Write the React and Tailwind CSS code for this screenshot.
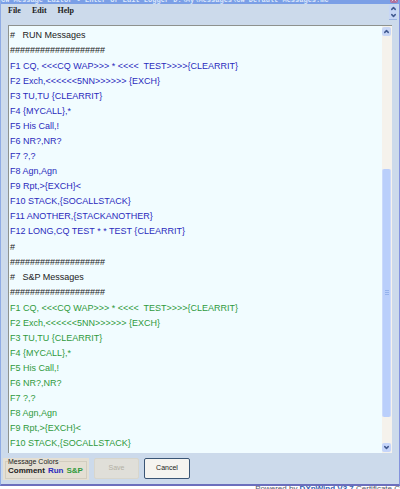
import { ChevronUp, ChevronDown, X } from 'lucide-react';

const runMessages = [
    'F1 CQ, <<<CQ WAP>>> * <<<<  TEST>>>>{CLEARRIT}',
    'F2 Exch,<<<<<<5NN>>>>>> {EXCH}',
    'F3 TU,TU {CLEARRIT}',
    'F4 {MYCALL},*',
    'F5 His Call,!',
    'F6 NR?,NR?',
    'F7 ?,?',
    'F8 Agn,Agn',
    'F9 Rpt,>{EXCH}<',
    'F10 STACK,{SOCALLSTACK}',
    'F11 ANOTHER,{STACKANOTHER}',
    'F12 LONG,CQ TEST * * TEST {CLEARRIT}',
];

const divider = '###################';

const sections = [
    { color: 'text-[#222222]', lines: ['#   RUN Messages', divider] },
    { color: 'text-[#2b2bbd]', lines: runMessages },
    { color: 'text-[#222222]', lines: ['#', divider, '#   S&P Messages', divider] },
    { color: 'text-[#2f9a3c]', lines: runMessages.slice(0, 10) },
];

function ScrollBar() {
    return (
        <div className="w-[10px] shrink-0 flex flex-col bg-[#f5f2ec]">
            <button aria-label="Scroll up" className="h-[9px] mr-px mt-px flex items-center justify-center rounded-xs bg-[#c9d7f6] text-[#41598f]">
                <ChevronUp className="w-[7px] h-[7px]" strokeWidth={5} />
            </button>
            <div className="flex-1 flex flex-col">
                <div className="flex-[132]" />
                <div className="flex-[247] mr-px rounded-xs bg-[#bacffb] border-x border-[#cbdafb] flex flex-col items-center justify-center gap-px">
                    <span className="w-1 h-px bg-[#94b2ec]" />
                    <span className="w-1 h-px bg-[#94b2ec]" />
                    <span className="w-1 h-px bg-[#94b2ec]" />
                </div>
                <div className="flex-[26]" />
            </div>
            <button aria-label="Scroll down" className="h-[9px] mr-px mb-px flex items-center justify-center rounded-xs bg-[#c5d5fa] text-[#41598f]">
                <ChevronDown className="w-[7px] h-[7px]" strokeWidth={5} />
            </button>
        </div>
    );
}

export default function App() {
    return (
        <div className="h-screen flex flex-col overflow-hidden bg-white font-['Liberation_Sans',sans-serif]">
            <div className="flex-1 min-h-0 flex flex-col bg-[#ccdaeb] border-x border-b-2 border-l-[#8fabe4] border-r-[#8494dd] border-b-[#6c6fbd]">
                {/* Title bar */}
                <header className="h-1 pb-px shrink-0 flex items-end justify-between overflow-hidden bg-[#7b9fe6]">
                    <h1 className="min-w-0 text-[7px] leading-[5px] font-bold text-[#dce8fc] whitespace-nowrap font-['Liberation_Mono',monospace]">
                        CW Message Editor - Enter or Edit Logger D:\My\Messages\CW Default Messages.mc
                    </h1>
                    <button aria-label="Close" className="w-2 h-2 mr-px shrink-0 rounded-xs bg-[#b0709c] text-white">
                        <X className="w-2 h-2" />
                    </button>
                </header>

                {/* Menu */}
                <nav className="h-[21px] shrink-0 flex items-start justify-between pl-[7px] pr-[2px] font-['Liberation_Serif',serif]">
                    <div className="flex gap-[11px] text-[8px] leading-[14px] font-bold text-[#222222]">
                        <button>File</button>
                        <button>Edit</button>
                        <button>Help</button>
                    </div>
                    <div className="w-2 mt-px flex flex-col items-center text-[#41598f] bg-[#c7d6f6] border-b border-[#9db4e0]">
                        <ChevronUp className="w-[7px] h-[7px]" strokeWidth={5} />
                        <ChevronDown className="w-[7px] h-[7px]" strokeWidth={5} />
                    </div>
                </nav>

                {/* Message list */}
                <main className="flex-1 min-h-0 mx-[7px] flex border-t border-l border-[#8e928e] bg-[#f1fcff]">
                    <div className="flex-1 min-w-0 overflow-hidden pl-px pt-[2px] flex flex-col gap-px text-[9px] leading-[15px]">
                        {sections.map((section, i) => (
                            <div key={i} className={section.color}>
                                {section.lines.map((line, j) => (
                                    <p key={j} className="whitespace-pre">{line}</p>
                                ))}
                            </div>
                        ))}
                    </div>
                    <ScrollBar />
                </main>

                {/* Footer */}
                <footer className="h-[31px] shrink-0 pl-[2px] flex items-center gap-[5px] text-[7px]">
                    <div className="w-[86px] h-[22px] px-[2px] bg-[#e4dfd3] text-[#222222]">
                        <fieldset className="h-[21px] px-[2px] border border-[#d2cdbf]">
                            <legend className="leading-[8px]">Message Colors</legend>
                            <div className="flex gap-[3px] text-[8px] leading-[9px] font-bold">
                                <span>Comment</span>
                                <span className="text-[#2b2bbd]">Run</span>
                                <span className="text-[#2f9a3c]">S&amp;P</span>
                            </div>
                        </fieldset>
                    </div>
                    <button disabled className="w-[45px] h-[21px] border border-[#d8d6cc] rounded-xs bg-[#e0dfd9] text-[#b3b0a4]">Save</button>
                    <button className="w-[46px] h-[21px] border border-[#3a5575] rounded-xs bg-[#f5f4f0] text-[#222222]">Cancel</button>
                </footer>
            </div>

            {/* Strip of the page behind the window */}
            <div className="h-[3px] shrink-0 overflow-hidden text-right text-[8px] leading-[6px] whitespace-nowrap text-[#555566]">
                Powered by <a href="#dxpwind" className="font-bold text-[#3a62b0]">DXpWind V3.7</a> Certificate C
            </div>
        </div>
    );
}
